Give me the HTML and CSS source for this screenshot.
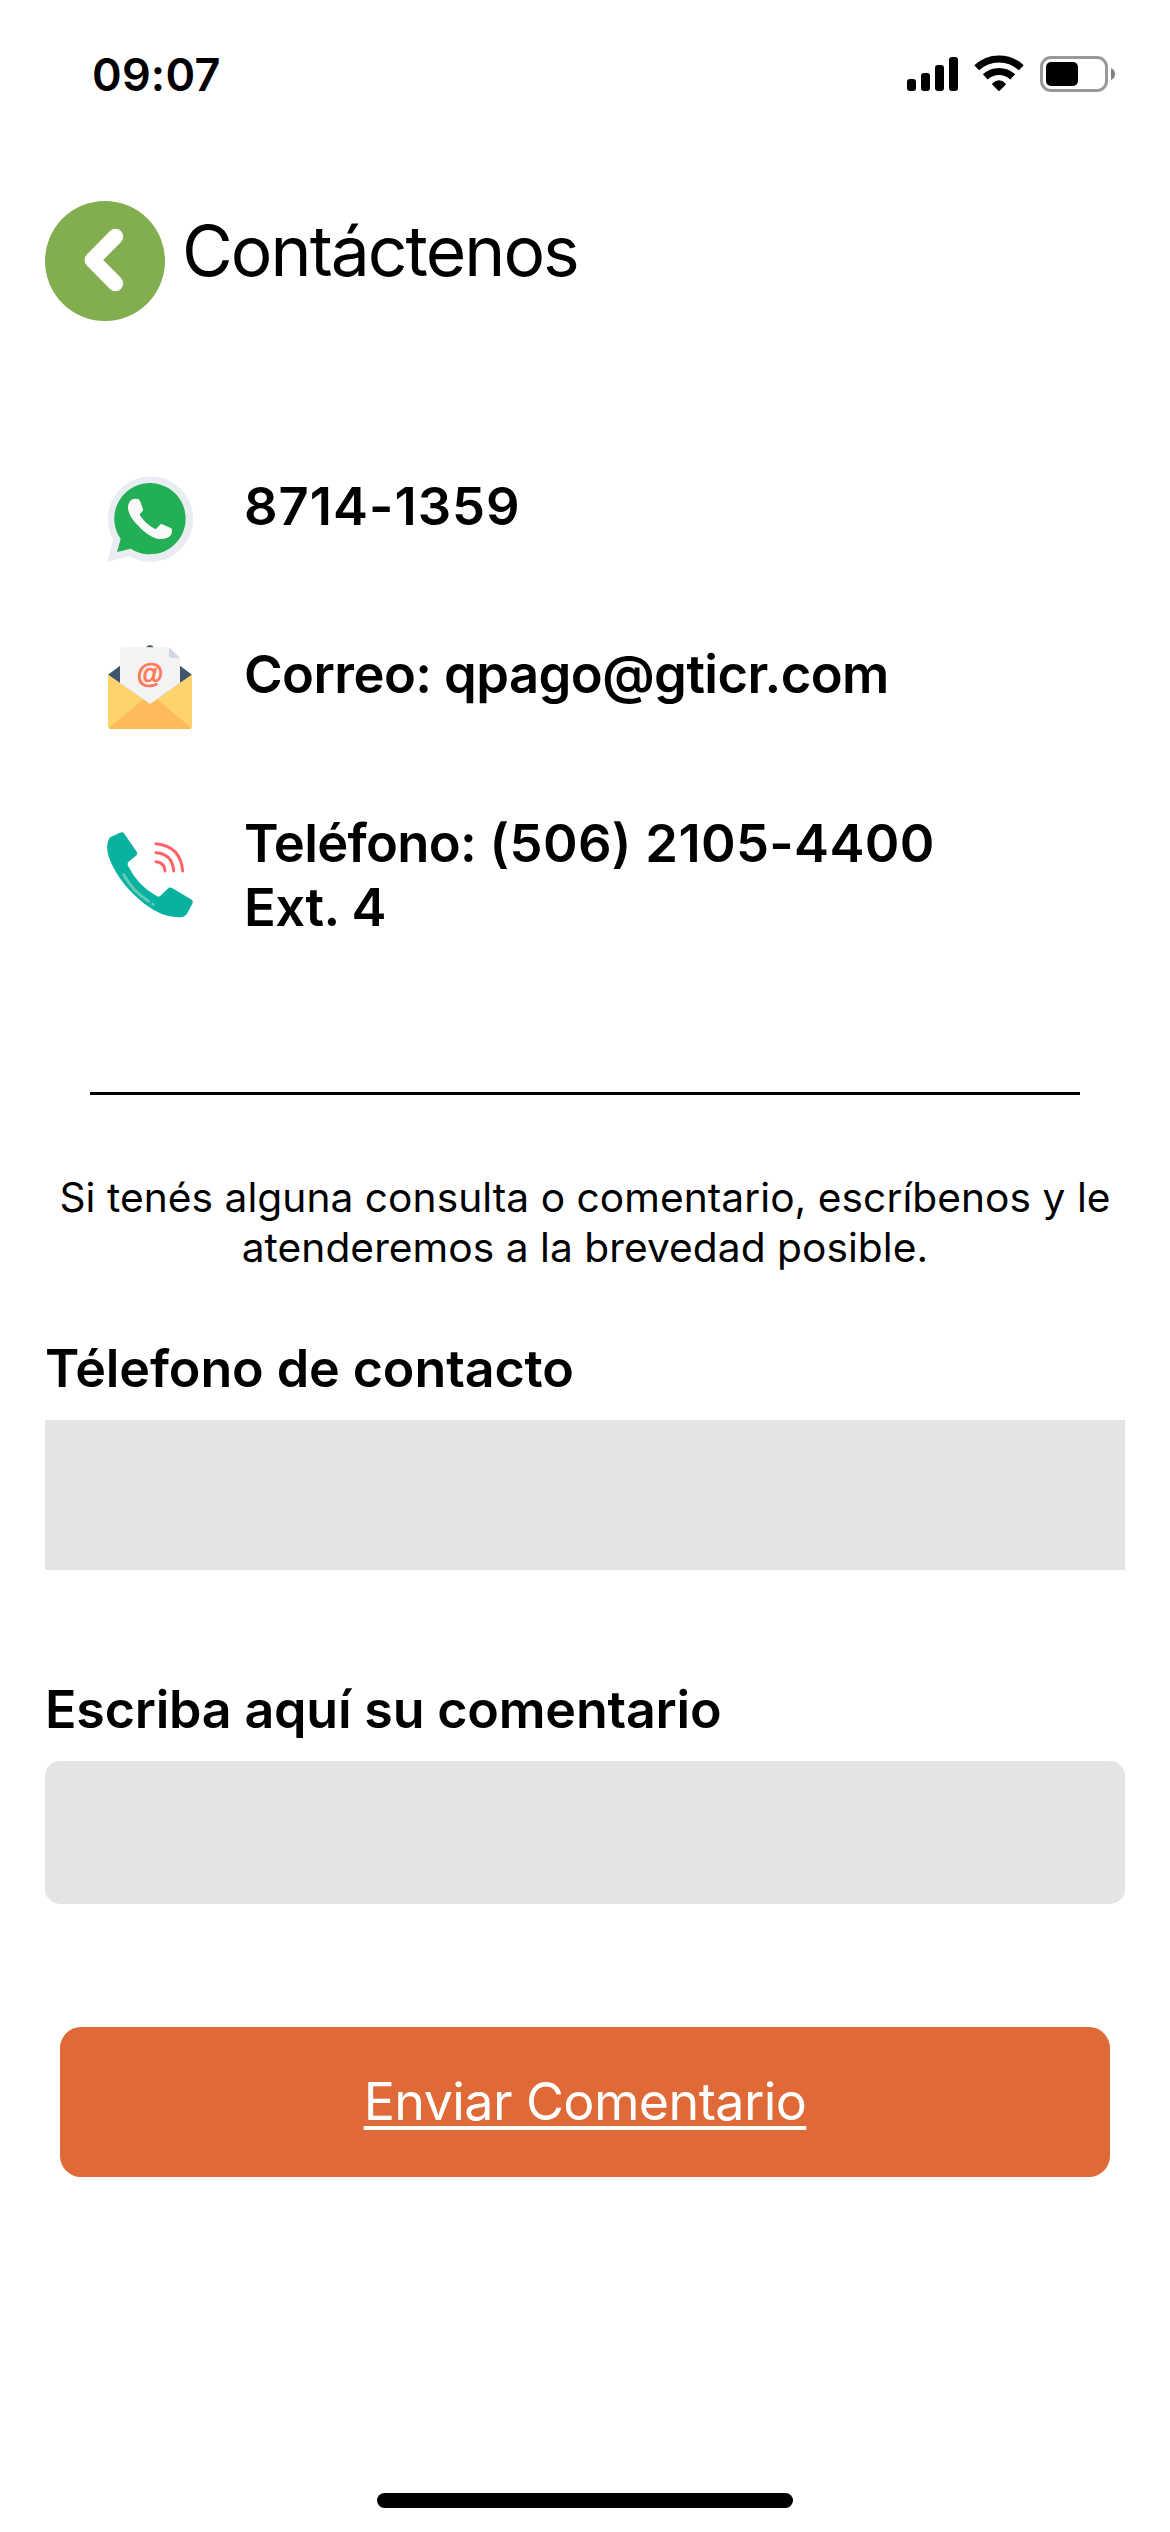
FILE: index.html
```html
<!DOCTYPE html>
<html lang="es">
<head>
<meta charset="utf-8">
<title>Contáctenos</title>
<link rel="stylesheet" href="styles.css">
</head>
<body>
<div class="screen">
  <div class="status-bar">
    <span class="clock">09:07</span>
    <svg class="status-icons" viewBox="905 50 212 48" width="212" height="48">
      <rect x="907" y="79" width="9" height="12" rx="3"/>
      <rect x="921" y="73" width="9" height="18" rx="3"/>
      <rect x="935" y="65" width="9" height="26" rx="3"/>
      <rect x="949" y="57" width="9" height="34" rx="3"/>
      <g fill="none" stroke="#000" stroke-width="7">
        <path d="M976.7 67.8A32.5 32.5 0 0 1 1021.3 67.8"/>
        <path d="M985.3 76.9A19.8 19.8 0 0 1 1012.7 76.9"/>
      </g>
      <path d="M992.4 83.6Q999 77 1005.6 83.6Q1006.2 84.2 1005.6 84.8L999.6 90.7Q999 91.3 998.4 90.7L992.4 84.8Q991.8 84.2 992.4 83.6Z"/>
      <rect x="1041.5" y="57.5" width="65" height="33" rx="9.5" fill="none" stroke="#999" stroke-width="3"/>
      <rect x="1046" y="62" width="32" height="24" rx="5"/>
      <path d="M1111 68Q1115 70 1115 74T1111 80Z" fill="#808080"/>
    </svg>
  </div>

  <header class="header">
    <svg class="back" viewBox="45 201 120 120" width="120" height="120">
      <circle cx="105" cy="261" r="60" fill="#82ae4f"/>
      <path d="M115.500 236.500L92.300 260L115.500 283.500" fill="none" stroke="#fff" stroke-width="15.500" stroke-linecap="round" stroke-linejoin="round"/>
    </svg>
    <h1 class="title">Contáctenos</h1>
  </header>

  <ul class="contacts">
    <li class="contact">
      <svg class="contact-icon" viewBox="51 48 258 258" width="86" height="86">
        <path d="M51 306L70 240A128 128 0 1 1 119 289Z" fill="#e9edf1"/>
        <path d="M81 276L92 237A107 107 0 1 1 122 266Z" fill="#23af55"/>
        <path d="M127 118Q135 115 145 117Q148 118 150 123L159 147Q160 151 157 154L150 162Q149 165 151 167Q168 193 194 206Q198 208 200 205L210 194Q213 191 217 193L242 204Q247 206 246 211Q246 226 236 232Q222 240 201 236Q174 230 143 196Q114 166 114 143Q114 126 127 118Z" fill="#fafafa"/>
      </svg>
      <span class="contact-text whatsapp">8714-1359</span>
    </li>
    <li class="contact">
      <svg class="contact-icon mail-icon" viewBox="54 45 252 252" width="84" height="84">
        <path d="M54 134L90 107H270L306 134L180 222ZM167 53Q180 37 193 53Z" fill="#3d566b"/>
        <path d="M54 134L180 221L306 134V288Q306 297 297 297H63Q54 297 54 288Z" fill="#ffd36c"/>
        <path d="M57 294L160 208H201L304 294Q301 297 297 297H63Q59 297 57 294Z" fill="#ffba5a"/>
        <path d="M90 60Q90 52 98 52H237L270 84V159L180 222L90 159Z" fill="#f3f3f3"/>
        <path d="M237 52L270 84H245Q237 84 237 76Z" fill="#cfd7e1"/>
        <text class="at" x="179" y="159" text-anchor="middle">@</text>
      </svg>
      <span class="contact-text mail">Correo: qpago@gticr.com</span>
    </li>
    <li class="contact phone-row">
      <svg class="contact-icon phone-icon" viewBox="51 95 258 258" width="86" height="86">
        <path d="M62 110L90 97Q98 93 103 100L140 154Q144 161 138 166L116 184Q111 189 114 196Q143 256 199 286Q207 292 213 285L233 265Q239 259 246 263L303 297Q310 301 308 308L292 339Q288 347 280 349Q228 359 164 311Q91 254 60 180Q45 140 56 118Q58 112 62 110Z" fill="#08b1a0"/>
        <path d="M101 223Q129 273 176 303M188 311L189 312" fill="none" stroke="#63c9b6" stroke-width="9" stroke-linecap="round"/>
        <g fill="none" stroke="#ff646b" stroke-width="9" stroke-linecap="round">
          <path d="M198 184Q224 187 225 212"/>
          <path d="M198 157Q248 161 251 212"/>
          <path d="M198 130Q272 137 278 212"/>
        </g>
      </svg>
      <span class="contact-text phone"><span class="phone-label">Teléfono:</span> (506) 2105-4400<br><span class="extension">Ext. 4</span></span>
    </li>
  </ul>

  <hr class="divider">

  <p class="intro">Si tenés alguna consulta o comentario, escríbenos y le<br>atenderemos a la brevedad posible.</p>

  <form class="form">
    <label class="label" for="telefono">Télefono de contacto</label>
    <input class="field" id="telefono" type="tel">
    <label class="label comment-label" for="comentario">Escriba aquí su comentario</label>
    <textarea class="field comment" id="comentario"></textarea>
    <button class="submit" type="button"><span class="submit-text">Enviar Comentario</span></button>
  </form>

  <div class="home-indicator"></div>
</div>
</body>
</html>
```
FILE: styles.css
```css
* {
  box-sizing: border-box;
}

body {
  margin: 0;
  background: #fff;
  color: #000;
  font-family: "Inter", "Liberation Sans", sans-serif;
}

.screen {
  display: flex;
  flex-direction: column;
  width: 1170px;
  height: 2532px;
  padding-bottom: 24px;
  overflow: hidden;
}

.status-bar {
  display: flex;
  justify-content: space-between;
  align-items: flex-start;
  height: 201px;
  padding: 48px 53px 0 92px;
}

.clock {
  font-size: 45px;
  font-weight: 600;
  line-height: 54px;
  letter-spacing: 0.2px;
}

.status-icons {
  margin-top: 2px;
}

.header {
  display: flex;
  gap: 17px;
  height: 120px;
  padding-left: 45px;
}

.title {
  margin: 8px 0 0;
  font-size: 69.5px;
  font-weight: 400;
  line-height: 84px;
  letter-spacing: -1.95px;
}

.contacts {
  display: flex;
  flex-direction: column;
  margin: 153px 0 0;
  padding: 0 0 0 107px;
  list-style: none;
}

.contact {
  display: grid;
  grid-template-columns: 86px 1fr;
  column-gap: 51px;
  align-items: start;
  height: 168px;
}

.contact-icon {
  margin-top: 2px;
}

.mail-icon {
  margin: 3px 0 0 1px;
}

.phone-icon {
  margin-top: 22px;
}

.phone-row {
  height: 282px;
}

.at {
  fill: #ff7858;
  stroke: #ff7858;
  stroke-width: 2px;
  font-family: "Liberation Sans", sans-serif;
  font-size: 82px;
  font-weight: 700;
  font-style: italic;
}

.contact-text {
  font-size: 52.5px;
  font-weight: 600;
  line-height: 64px;
}

.whatsapp {
  letter-spacing: 1px;
}

.mail {
  letter-spacing: -0.57px;
}

.phone {
  margin-top: 1px;
  letter-spacing: 0.35px;
}

.phone-label {
  letter-spacing: -0.7px;
}

.extension {
  letter-spacing: -0.5px;
}

.divider {
  width: 990px;
  height: 3px;
  margin: 0 auto;
  border: 0;
  background: #000;
}

.intro {
  margin: 78px 0 0;
  font-size: 40.7px;
  line-height: 50px;
  letter-spacing: 0.04px;
  text-align: center;
}

.form {
  display: flex;
  flex-direction: column;
  padding: 64px 45px 0;
}

.label {
  font-size: 52px;
  font-weight: 600;
  line-height: 64px;
  letter-spacing: -0.1px;
}

.field {
  width: 100%;
  height: 150px;
  margin: 19px 0 0;
  padding: 0 24px;
  border: 0;
  border-radius: 0;
  background: #e4e4e4;
  font: inherit;
  font-size: 48px;
}

.comment-label {
  margin-top: 108px;
  letter-spacing: -0.2px;
}

.comment {
  height: 143px;
  border-radius: 15px;
  resize: none;
}

.submit {
  height: 150px;
  margin: 123px 15px 0;
  padding: 0;
  border: 0;
  border-radius: 21px;
  background: #df6a37;
  color: #fff;
  font: inherit;
  font-size: 52px;
  line-height: 64px;
  letter-spacing: -0.6px;
}

.submit-text {
  display: inline-block;
  text-decoration: underline;
  text-decoration-thickness: 4px;
  text-decoration-skip-ink: none;
  text-underline-offset: 6px;
}

.home-indicator {
  width: 416px;
  height: 15px;
  margin: auto auto 0;
  border-radius: 8px;
  background: #000;
}
```
